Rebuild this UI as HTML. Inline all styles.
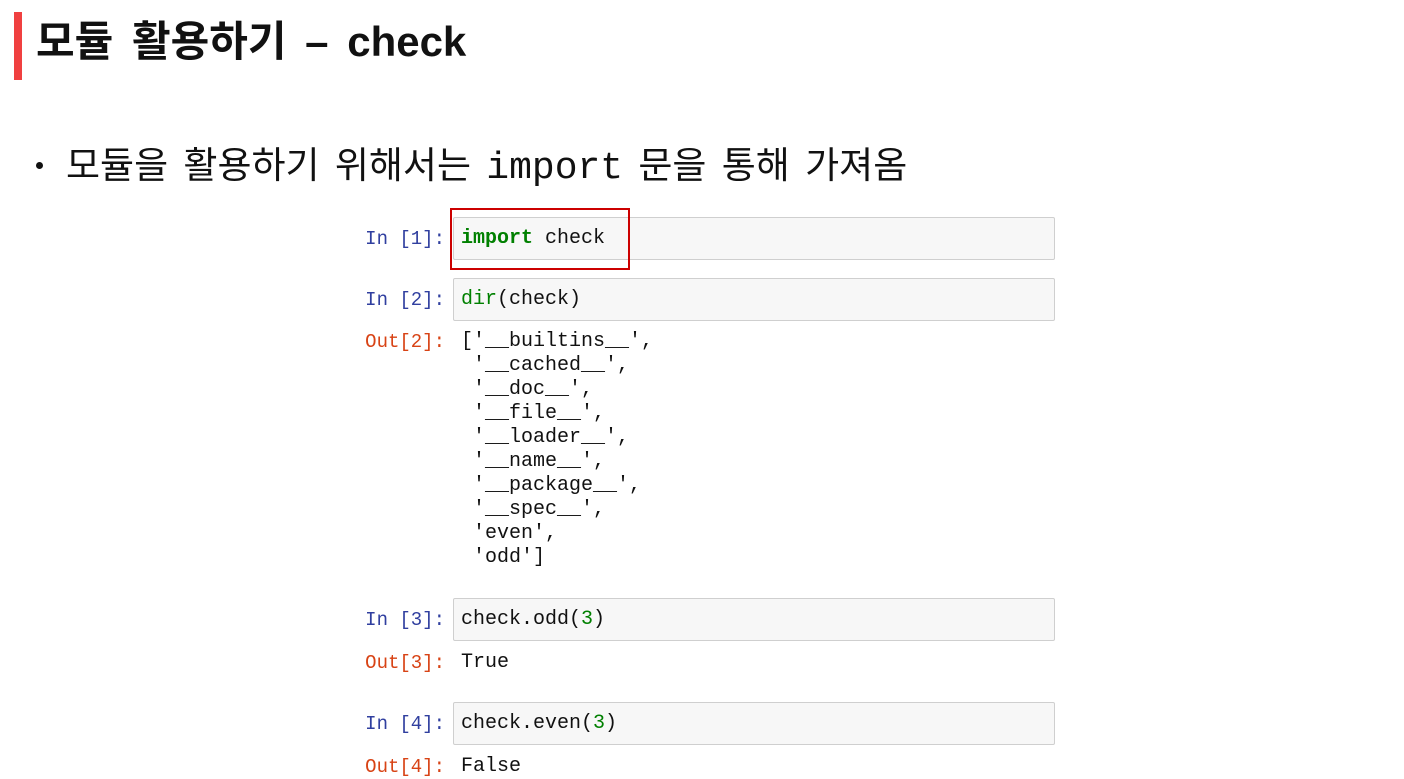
<!DOCTYPE html>
<html><head><meta charset="utf-8"><style>
body{margin:0;width:1404px;height:778px;background:#fff;position:relative;overflow:hidden;font-family:"Liberation Sans","Noto Sans CJK KR",sans-serif}
.bar{position:absolute;left:14px;top:12px;width:8px;height:68px;background:#f04040}
.t{position:absolute;left:36px;top:14px;font-size:42px;font-weight:bold;color:#111;line-height:56px;word-spacing:7px}
.dot{position:absolute;left:36px;top:162px;width:7px;height:7px;border-radius:50%;background:#111}
.b{position:absolute;left:66px;top:142px;font-size:37px;color:#111;line-height:48px;word-spacing:5px}
.b .mono{font-size:38px}
.mono{font-family:"Liberation Mono",monospace}
.p{position:absolute;width:445px;left:0;text-align:right;font-family:"Liberation Mono",monospace;font-size:19px;line-height:24px}
.in{color:#303f9f}.out{color:#d84315}
.box{position:absolute;left:453px;width:600px;height:41px;background:#f7f7f7;border:1px solid #cfcfcf;border-radius:2px}
.c{position:absolute;left:461px;font-family:"Liberation Mono",monospace;font-size:20px;line-height:24px;color:#111;white-space:pre}
.g{color:#008000}.kw{color:#008000;font-weight:bold}
.red{position:absolute;left:450px;top:208px;width:176px;height:58px;border:2px solid #c00}
</style></head><body>
<div class="bar"></div>
<div class="t">모듈 활용하기 – check</div>
<div class="dot"></div>
<div class="b">모듈을 활용하기 위해서는 <span class="mono">import</span> 문을 통해 가져옴</div>

<div class="box" style="top:217px"></div>
<div class="p in" style="top:227px">In [1]:</div>
<div class="c" style="top:227px"><span class="kw">import</span> check</div>
<div class="red"></div>

<div class="box" style="top:278px"></div>
<div class="p in" style="top:288px">In [2]:</div>
<div class="c" style="top:288px"><span class="g">dir</span>(check)</div>

<div class="p out" style="top:330px">Out[2]:</div>
<div class="c" style="top:330px">['__builtins__',
 '__cached__',
 '__doc__',
 '__file__',
 '__loader__',
 '__name__',
 '__package__',
 '__spec__',
 'even',
 'odd']</div>

<div class="box" style="top:598px"></div>
<div class="p in" style="top:608px">In [3]:</div>
<div class="c" style="top:608px">check.odd(<span class="g">3</span>)</div>
<div class="p out" style="top:651px">Out[3]:</div>
<div class="c" style="top:651px">True</div>

<div class="box" style="top:702px"></div>
<div class="p in" style="top:712px">In [4]:</div>
<div class="c" style="top:712px">check.even(<span class="g">3</span>)</div>
<div class="p out" style="top:755px">Out[4]:</div>
<div class="c" style="top:755px">False</div>
</body></html>
